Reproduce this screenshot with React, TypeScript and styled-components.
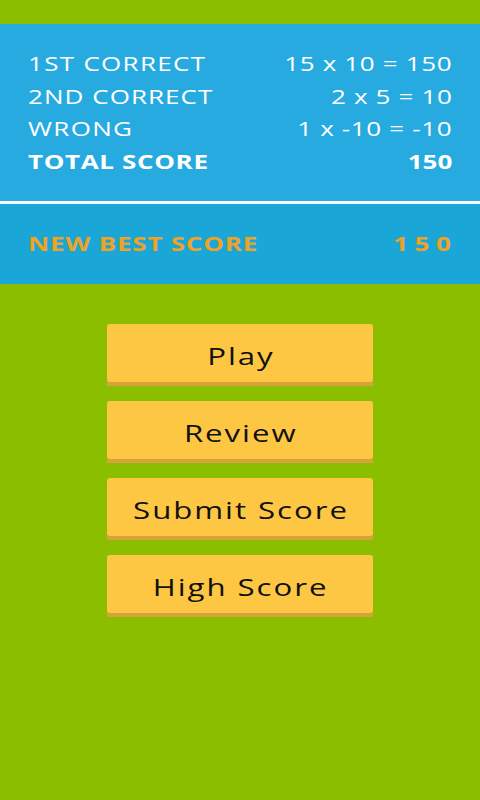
import React from 'react';
import styled, { createGlobalStyle } from 'styled-components';

const GlobalStyle = createGlobalStyle`
  html, body {
    margin: 0;
    padding: 0;
    background: #8cbe00;
  }
  * {
    box-sizing: border-box;
  }
`;

const Screen = styled.div`
  width: 480px;
  height: 800px;
  background: #8cbe00;
  padding-top: 24px;
  font-family: 'Open Sans', 'DejaVu Sans', sans-serif;
`;

const ScorePanel = styled.section`
  background: #27aadf;
`;

const Breakdown = styled.div`
  padding: 23px 28px 23px 28px;
  display: flex;
  flex-direction: column;
`;

const Row = styled.div<{ $bold?: boolean }>`
  display: flex;
  justify-content: space-between;
  align-items: center;
  height: 32.7px;
  color: #fff;
  font-size: 20px;
  font-weight: ${p => (p.$bold ? 700 : 400)};
`;

/* the app's font is drawn wide, so the text is stretched sideways */
const Label = styled.span<{ $spacing: number }>`
  display: inline-block;
  letter-spacing: ${p => p.$spacing}px;
  transform: scaleX(1.3);
  transform-origin: left center;
`;

const Value = styled.span<{ $spacing: number }>`
  display: inline-block;
  letter-spacing: ${p => p.$spacing}px;
  margin-right: -${p => p.$spacing}px;
  transform: scaleX(1.3);
  transform-origin: right center;
`;

const Divider = styled.div`
  height: 3px;
  background: #f2fbff;
`;

const BestRow = styled.div`
  background: #1ba6d8;
  height: 80px;
  padding: 0 28px;
  display: flex;
  justify-content: space-between;
  align-items: center;
  color: #f0a323;
  font-size: 20px;
  font-weight: 700;
`;

const Menu = styled.nav`
  display: flex;
  flex-direction: column;
  align-items: center;
  gap: 15px;
  padding-top: 40px;
`;

const MenuButton = styled.button`
  width: 266px;
  height: 62px;
  border: none;
  border-radius: 3px;
  background: #fdc744;
  box-shadow: inset 0 -4px 0 #d6a23a;
  padding: 1px 0 0 0;
  color: #111;
  font-family: 'Open Sans', 'DejaVu Sans', sans-serif;
  font-size: 24px;
  cursor: pointer;
`;

const ButtonText = styled.span`
  display: inline-block;
  letter-spacing: 1.5px;
  margin-right: -1.5px;
  transform: scaleX(1.3);
`;

const rows = [
  { label: '1ST CORRECT', value: '15 x 10 = 150', ls: 1, vs: 0.5 },
  { label: '2ND CORRECT', value: '2 x 5 = 10', ls: 0.8, vs: 0.5 },
  { label: 'WRONG', value: '1 x -10 = -10', ls: 1, vs: 0.5 },
  { label: 'TOTAL SCORE', value: '150', ls: 0.5, vs: 0, bold: true },
];

const buttons = ['Play', 'Review', 'Submit Score', 'High Score'];

const App: React.FC = () => (
  <>
    <GlobalStyle />
    <Screen>
      <ScorePanel>
        <Breakdown>
          {rows.map(r => (
            <Row key={r.label} $bold={r.bold}>
              <Label $spacing={r.ls}>{r.label}</Label>
              <Value $spacing={r.vs}>{r.value}</Value>
            </Row>
          ))}
        </Breakdown>
        <Divider />
        <BestRow>
          <Label $spacing={0.6}>NEW BEST SCORE</Label>
          <Value $spacing={5}>150</Value>
        </BestRow>
      </ScorePanel>
      <Menu>
        {buttons.map(b => (
          <MenuButton key={b}>
            <ButtonText>{b}</ButtonText>
          </MenuButton>
        ))}
      </Menu>
    </Screen>
  </>
);

export default App;
